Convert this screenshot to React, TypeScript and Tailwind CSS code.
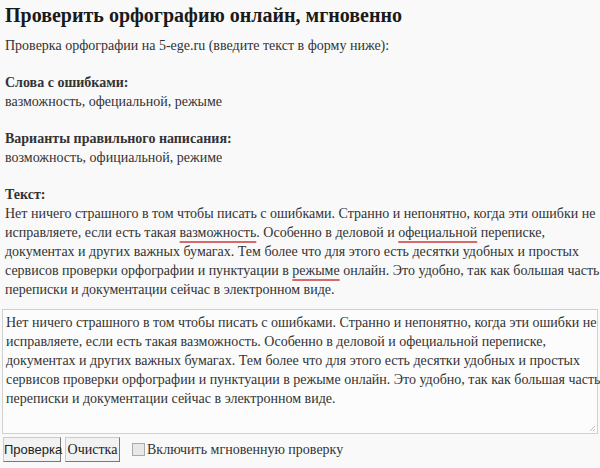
import React from "react";

const Err = ({ children }: { children: React.ReactNode }) => (
  <span className="underline decoration-[#d66a6a] decoration-[1.5px] underline-offset-[4px]">{children}</span>
);

const serif = { fontFamily: '"Liberation Serif", "DejaVu Serif", serif' };

export default function App() {
  return (
    <div className="w-[600px] h-[468px] bg-[#f9f9f9] text-[#333] overflow-hidden" style={serif}>
      <div className="px-[5px]">
        <h1 className="text-[20px] font-bold text-[#1a1a1a] leading-[28px] pt-[1px]">
          Проверить орфографию онлайн, мгновенно
        </h1>
        <p className="text-[14px] leading-[19px] mt-[7px]">
          Проверка орфографии на 5-ege.ru (введите текст в форму ниже):
        </p>
        <div className="text-[14px] leading-[19px] mt-[18px]">
          <div className="font-bold">Слова с ошибками:</div>
          <div>вазможность, офециальной, режыме</div>
        </div>
        <div className="text-[14px] leading-[19px] mt-[18px]">
          <div className="font-bold">Варианты правильного написания:</div>
          <div>возможность, официальной, режиме</div>
        </div>
        <div className="text-[14px] leading-[19px] mt-[18px]">
          <div className="font-bold">Текст:</div>
          <div className="whitespace-nowrap">
            Нет ничего страшного в том чтобы писать с ошибками. Странно и непонятно, когда эти ошибки не
            <br />
            исправляете, если есть такая <Err>вазможность</Err>. Особенно в деловой и <Err>офециальной</Err> переписке,
            <br />
            документах и других важных бумагах. Тем более что для этого есть десятки удобных и простых
            <br />
            сервисов проверки орфографии и пунктуации в <Err>режыме</Err> онлайн. Это удобно, так как большая часть
            <br />
            переписки и документации сейчас в электронном виде.
          </div>
        </div>
      </div>
      <div className="px-[2px] mt-[10px]">
        <div className="relative h-[125px] border border-[#d0d0d0] bg-[#fcfcfc] px-[3px] py-[3px] text-[14px] leading-[19px] whitespace-nowrap">
          Нет ничего страшного в том чтобы писать с ошибками. Странно и непонятно, когда эти ошибки не
          <br />
          исправляете, если есть такая вазможность. Особенно в деловой и офециальной переписке,
          <br />
          документах и других важных бумагах. Тем более что для этого есть десятки удобных и простых
          <br />
          сервисов проверки орфографии и пунктуации в режыме онлайн. Это удобно, так как большая часть
          <br />
          переписки и документации сейчас в электронном виде.
          <svg className="absolute right-[1px] bottom-[1px]" width="8" height="8" viewBox="0 0 8 8">
            <path d="M7 2 L2 7 M7 5 L5 7" stroke="#bbb" strokeWidth="1" />
          </svg>
        </div>
      </div>
      <div className="flex items-center px-[3px] mt-[3px] gap-[4px]">
        <button
          className="h-[25px] w-[58px] px-0 text-[13px] text-[#222] bg-[#f2f2f2] border border-[#ccc] border-r-[#777] border-b-[#777]"
          style={{ fontFamily: '"Liberation Sans", sans-serif' }}
        >
          Проверка
        </button>
        <button className="h-[25px] w-[55px] px-0 text-[14px] text-[#222] bg-[#f2f2f2] border border-[#ccc] border-r-[#777] border-b-[#777]">
          Очистка
        </button>
        <label className="flex items-center text-[14px] ml-[8px]">
          <span className="w-[13px] h-[13px] border border-[#aaa] bg-[#e8e8e8] mr-[2px] inline-block" />
          Включить мгновенную проверку
        </label>
      </div>
    </div>
  );
}
